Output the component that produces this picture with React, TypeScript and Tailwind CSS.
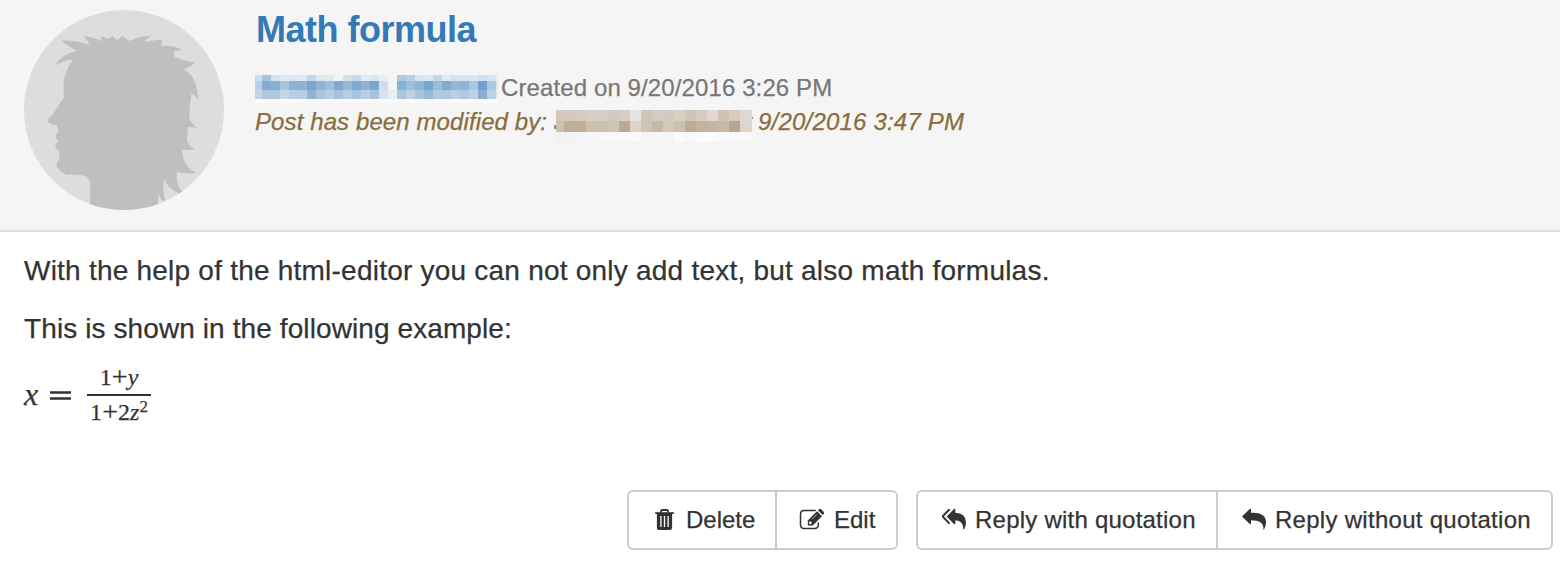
import React from 'react';

const NAME_ROWS: string[][] = [
  '#cfdeeb #a2c4df #d3e3ef #e0e9f1 #dce6f0 #e2eaf0 #c3d8e8 #dce7ee #e0e9f0 #f3f5f4 #d3e2ec #c3d9e8 #e4ebf0 #dbe7ee #e8eef2 #f5f6f4 #adcae1 #b8cfe2 #d8e5ed #dce7ef #c3d8e7 #e2eaef #d5e3ec #d9e5ee #dae5ed #d0e0ec #d7e6f0 #eeeff1'.split(' '),
  '#b8cfe3 #84add4 #88b0d5 #a8c5e0 #8ab2d7 #8cb4d8 #7ba5d0 #8fb4d6 #9fbfdd #81a9d2 #96b9da #80a9d3 #8db2d6 #79a5d0 #cfdfeb #f3f5f5 #85b2d7 #9dbfde #8eb4d6 #76a6d0 #9abddc #82abd4 #93b8da #91b5d8 #a7c6df #739fce #a8cae4 #d9e7f1'.split(' '),
  '#c3d5e5 #adc7df #b1c8df #c4d5e6 #b8cfe3 #b7cde2 #8fb4d7 #aac5df #b9cde2 #a5c3de #b8cee2 #a8c5df #b9cfe3 #a7c2de #d5e1ec #e9eff1 #a9c7e0 #bed1e4 #a8c5df #98bbdb #afc9df #adc7df #b9cee2 #b3c8e0 #bed1e4 #88aed4 #b9d1e5 #e2e9ef'.split(' '),
];
const EDITOR_ROWS: string[][] = [
  '#d2cabf #d2c8bc #d5ccc0 #d8cfc4 #d8cec3 #d4c9bd #d5cec6 #e7e4e0 #d0c4b8 #d5cbbf #d1c9c0 #d9d0c4 #d2c5b5 #d7cbbd #e1d7d0 #d0c1b1 #d8ccbf #ddd8d1'.split(' '),
  '#cbc1b2 #bfaf98 #bfad96 #cdc0af #ccbfae #d0c4b4 #bcab91 #dbd4ca #cfc3b5 #c6b9a5 #d3c8ba #cdc0ae #bfac93 #c4b39e #c4b4a0 #c9baa7 #baa58c #ddd5cb'.split(' '),
  '#f3f2f1 #f4f3f3 #f5f4f4 #f6f6f6 #f8f8f8 #f9f9f9 #f9f9f9 #fafafa #f5f5f5 #f7f7f7 #f4f5f5 #fafcfc #f8f8f8 #fbfbfb #fbfbfb #f9f9fa #f8f8f8 #f8f8f8'.split(' '),
];

function ObscuredName() {
  return (
    <span className="grid w-[243px] shrink-0 grid-cols-[7px_repeat(26,9px)_2px] grid-rows-[6px_9px_9px_4px]">
      {NAME_ROWS.flat().map((c, i) => (
        <i key={i} style={{ backgroundColor: c }} />
      ))}
      <i className="col-span-full bg-[#fafafa]" />
    </span>
  );
}

function ObscuredEditor() {
  return (
    <span className="relative grid w-[196px] shrink-0 grid-cols-[8px_repeat(17,11px)_1px] grid-rows-[11px_11px_10px]">
      {EDITOR_ROWS.map((row, r) =>
        [...row, row[17]].map((c, i) => <i key={`${r}-${i}`} style={{ backgroundColor: c }} />),
      )}
      <i className="absolute top-[15px] -left-[2px] h-1 w-[2px] bg-[#a08a62]" />
      <i className="absolute top-[7px] left-[196px] h-[2px] w-px bg-[#a08a62]" />
    </span>
  );
}

function Avatar() {
  return (
    <svg className="size-[200px] shrink-0 rounded-full bg-[#dcddde]" viewBox="30 30 600 600">
      <path
        fill="#bfbfbf"
        d="M228 640V548Q224 526 202 526Q178 522 158 524Q136 516 128 498Q126 488 136 476V454Q124 446 124 436Q126 428 134 424Q122 414 124 406L134 392Q128 378 128 374Q106 376 101 362Q102 354 114 346Q132 320 150 292Q148 272 149 250Q150 216 178 178Q146 182 122 198Q136 166 188 152Q160 138 143 122Q180 120 226 134Q222 120 208 109Q238 110 264 124L260 108L282 116L296 108L308 121L326 108L342 122L356 120Q378 106 412 109Q396 116 392 126L442 118Q446 126 440 138Q480 134 504 150L480 154V170Q514 184 543 187Q526 204 508 208Q550 228 552 298Q542 286 532 280Q526 324 526 354Q532 372 550 383Q530 382 522 380L519 420Q524 440 542 447Q526 452 504 448Q506 502 546 518Q520 524 490 516Q482 552 506 576L498 582Q464 568 450 536Q444 580 456 604Q436 600 434 580L430 640Z"
      />
    </svg>
  );
}

const TrashIcon = () => (
  <svg className="h-6 w-6" viewBox="0 0 24 24" fill="none">
    <path d="M8 4.6V3.2Q8 2 9.2 2H13.8Q15 2 15 3.2V4.6" stroke="#333" strokeWidth="1.8" />
    <path d="M2.2 4.2H20.8V6H2.2Z" fill="#333" />
    <path d="M3.9 5.8H19.1V19.4Q19.1 22 16.8 22H6.2Q3.9 22 3.9 19.4Z" fill="#333" />
    <path d="M7.9 8V19M11.5 8V19M15.1 8V19" stroke="#fff" strokeWidth="1.3" />
  </svg>
);

const EditIcon = () => (
  <svg className="h-6 w-[26px]" viewBox="0 0 26 24" fill="none">
    <path d="M16.8 2.4H5.2Q1.5 2.4 1.5 6.1V16.7Q1.5 20.4 5.2 20.4H15.6Q19.3 20.4 19.3 16.7V14.6" stroke="#333" strokeWidth="1.5" />
    <path d="M8.8 17.4V12.4L18 3.2L23 8.2L13.8 17.4Z" fill="#333" />
    <path d="M18.9 2.3L20 1.2Q21.1 .2 22.3 1.4L24.6 3.7Q25.8 4.9 24.7 6L23.8 7.1Z" fill="#333" />
    <path d="M10.2 14V16H12.2L13 15.1L11.1 13.1Z" fill="#fff" />
    <path d="M13.2 11L17.8 6.4" stroke="#fff" strokeWidth=".6" />
  </svg>
);

const ReplyIcon = () => (
  <svg className="h-6 w-6" viewBox="0 0 24 24" fill="#333">
    <path d="M0 8.4L7.7 1Q9 .2 9 1.5V4.7Q24 4 24 14.5Q24 18 22 21.5Q21.4 22.2 21.4 21Q22 12.2 9 12.2V15.6Q9 16.6 7.8 15.9Z" />
  </svg>
);

const ReplyAllIcon = () => (
  <svg className="h-6 w-6" viewBox="0 0 24 24" fill="#333">
    <path d="M4.6 8.4L12 1Q13.3 .1 13.3 1.5V4.7Q24 5.2 24 14.5Q24 18.5 22 21.5Q21.3 22.2 21.3 21Q21.5 12.6 13.3 12.2V15.5Q13.3 16.7 12 15.9Z" />
    <path d="M7.6 1.2L.6 8.4L7.6 15.6" fill="none" stroke="#333" strokeWidth="2" />
  </svg>
);

const BTN = 'flex h-[60px] items-center border-2 border-[#ccc] bg-white text-[#333]';

export default function App() {
  return (
    <div className="flex h-[562px] w-[1560px] flex-col overflow-hidden bg-white font-['Liberation_Sans',Arial,sans-serif] text-[#333] [-webkit-text-stroke:0.25px]">
      <header className="flex h-[232px] shrink-0 gap-8 border-b-2 border-[#ddd] bg-[#f5f5f5] pt-2.5 pl-6 whitespace-nowrap">
        <Avatar />
        <div className="flex flex-col">
          <h1 className="h-[65px] text-[36px] leading-[40px] font-bold tracking-[-0.5px] text-[#337ab7] [-webkit-text-stroke:0]">Math formula</h1>
          <div className="-ml-px flex h-[35px] text-[24px] leading-[26px] text-[#777]">
            <ObscuredName />
            <span className="ml-[3px] tracking-[0.11px]">Created on 9/20/2016 3:26 PM</span>
          </div>
          <div className="-ml-px flex text-[24px] leading-[24px] text-[#8a6d3b] italic">
            <span className="w-[301px] tracking-[0.1px]">Post has been modified by:</span>
            <ObscuredEditor />
            <span className="ml-[6px] tracking-[0.2px]">9/20/2016 3:47 PM</span>
          </div>
        </div>
      </header>
      <main className="flex flex-col pt-[19px] pl-6 text-[28px] leading-[40px] whitespace-nowrap">
        <p className="mb-[18px] tracking-[0.225px]">With the help of the html-editor you can not only add text, but also math formulas.</p>
        <p className="tracking-[0.1px]">This is shown in the following example:</p>
        <div className="mt-[16px] flex h-[62px] items-center font-['Liberation_Serif',serif] text-[32px] leading-[30px]">
          <span className="w-[25px] pb-1 italic">x</span>
          <svg className="mr-[15px] mb-[2px] h-[12px] w-[23px]" viewBox="0 0 23 12">
            <path d="M1 3.5H22M1 9.5H22" stroke="#333" strokeWidth="2.4" />
          </svg>
          <span className="flex w-16 flex-col items-center text-[24px] leading-[24px]">
            <span className="flex h-[29px]">1<span className="w-[16px] text-center text-[28px]">+</span><i>y</i></span>
            <span className="h-0.5 w-16 bg-[#333]" />
            <span className="flex h-[31px] pt-[4px]">1<span className="w-[16px] text-center text-[28px]">+</span>2<i>z</i><span className="-mt-[5px] text-[17px]">2</span></span>
          </span>
        </div>
      </main>
      <footer className="mt-auto mr-[7px] mb-3 flex justify-end gap-[18px] text-[24px] whitespace-nowrap">
        <div className="flex">
          <button className={`${BTN} w-[150px] rounded-l-[6px] pl-6`}><TrashIcon /><span className="ml-[9px]">Delete</span></button>
          <button className={`${BTN} -ml-0.5 w-[123px] rounded-r-[6px] pl-[22px]`}><EditIcon /><span className="ml-[9px]">Edit</span></button>
        </div>
        <div className="flex">
          <button className={`${BTN} w-[302px] rounded-l-[6px] pl-6`}><ReplyAllIcon /><span className="ml-[9px] tracking-[0.23px]">Reply with quotation</span></button>
          <button className={`${BTN} -ml-0.5 w-[337px] rounded-r-[6px] pl-6`}><ReplyIcon /><span className="ml-[9px] tracking-[0.28px]">Reply without quotation</span></button>
        </div>
      </footer>
    </div>
  );
}
